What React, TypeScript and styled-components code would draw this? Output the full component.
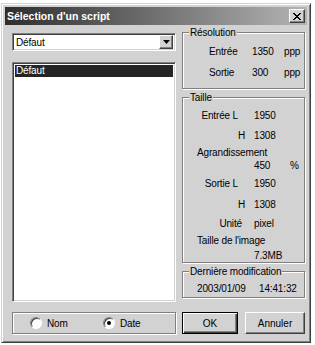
import React from 'react';
import styled, { createGlobalStyle, css } from 'styled-components';

const face = '#d2d2d2';

const Global = createGlobalStyle`
  html, body {
    margin: 0;
    padding: 0;
    background: #fff;
  }
  body {
    font-family: "Liberation Sans", Arial, sans-serif;
    font-size: 10px;
    letter-spacing: -0.15px;
    color: #000;
  }
`;

const raised = css`
  border: 1px solid;
  border-color: #fff #404040 #404040 #fff;
  box-shadow: inset -1px -1px #808080;
`;

const sunken = css`
  border: 1px solid;
  border-color: #808080 #fff #fff #808080;
  box-shadow: inset 1px 1px #404040, inset -1px -1px ${face};
`;

const Window = styled.div`
  margin: 3px 0 0 1px;
  width: 310px;
  height: 340px;
  box-sizing: border-box;
  background: ${face};
  border: 1px solid;
  border-color: ${face} #404040 #404040 ${face};
  box-shadow: inset 1px 1px #fff, inset -1px -1px #808080;
  padding: 3px;
  display: flex;
  flex-direction: column;
`;

const TitleBar = styled.div`
  height: 18px;
  flex: none;
  display: flex;
  align-items: center;
  justify-content: space-between;
  padding: 0 2px 0 2px;
  background: linear-gradient(to right, #2e2e2e, #b4b4b4);
`;

const Title = styled.span`
  color: #fff;
  font-weight: bold;
  font-size: 10.5px;
  letter-spacing: 0;
`;

const CloseButton = styled.button`
  ${raised};
  width: 16px;
  height: 14px;
  padding: 0;
  background: ${face};
  display: flex;
  align-items: center;
  justify-content: center;
`;

const Content = styled.div`
  display: grid;
  grid-template-columns: 164px 123px;
  grid-template-rows: 276px 22px;
  column-gap: 6px;
  row-gap: 10px;
  padding: 1px 2px 0 7px;
`;

const LeftCol = styled.div`
  display: flex;
  flex-direction: column;
`;

const Combo = styled.div`
  ${sunken};
  margin-top: 7px;
  height: 18px;
  box-sizing: border-box;
  background: #fff;
  display: flex;
  align-items: center;
  padding: 2px 2px 2px 3px;
`;

const ComboText = styled.span`
  flex: 1;
`;

const ComboButton = styled.div`
  ${raised};
  width: 14px;
  height: 14px;
  box-sizing: border-box;
  background: ${face};
  display: flex;
  align-items: center;
  justify-content: center;
`;

const List = styled.div`
  ${sunken};
  margin-top: 11px;
  flex: 1;
  background: #fff;
  padding: 2px;
`;

const ListItem = styled.div<{ $selected?: boolean }>`
  height: 12px;
  line-height: 12px;
  padding-left: 1px;
  background: ${(p) => (p.$selected ? '#242424' : 'transparent')};
  color: ${(p) => (p.$selected ? '#fff' : '#000')};
`;

const RightCol = styled.div`
  display: flex;
  flex-direction: column;
  gap: 2px;
`;

const Group = styled.fieldset<{ $h: number }>`
  margin: 0;
  padding: 0;
  min-width: 0;
  height: ${(p) => p.$h}px;
  box-sizing: border-box;
  border: 1px solid #808080;
  box-shadow: inset 1px 1px #fff, 1px 1px #fff;
`;

const Legend = styled.legend`
  margin-left: 6px;
  padding: 0 1px;
  line-height: 13px;
  background: ${face};
`;

const ResRow = styled.div<{ $h: number; $top?: number }>`
  display: grid;
  grid-template-columns: 43px 32px 1fr;
  height: ${(p) => p.$h}px;
  line-height: ${(p) => p.$h}px;
  margin-top: ${(p) => p.$top ?? 0}px;
  padding-left: 26px;
`;

const SizeRow = styled.div<{ $h: number; $top?: number }>`
  display: grid;
  grid-template-columns: 71px 36px 1fr;
  height: ${(p) => p.$h}px;
  line-height: ${(p) => p.$h}px;
  margin-top: ${(p) => p.$top ?? 0}px;
`;

const SizeLabel = styled.span<{ $pr: number }>`
  text-align: right;
  padding-right: ${(p) => p.$pr}px;
`;

const Caption = styled.div<{ $h: number }>`
  height: ${(p) => p.$h}px;
  line-height: ${(p) => p.$h}px;
  padding-left: 14px;
`;

const DateLine = styled.div`
  margin-top: 4px;
  line-height: 14px;
  padding-left: 14px;
  display: grid;
  grid-template-columns: 62px auto;
`;

const RadioBox = styled.div`
  height: 20px;
  border: 1px solid #808080;
  box-shadow: inset 1px 1px #fff, 1px 1px #fff;
  display: grid;
  grid-template-columns: 73px 73px;
  align-items: center;
  padding-left: 17px;
`;

const RadioLabel = styled.label`
  display: flex;
  align-items: center;
  gap: 5px;
`;

const RadioCircle = styled.span<{ $checked?: boolean }>`
  width: 12px;
  height: 12px;
  box-sizing: border-box;
  border-radius: 50%;
  border: 1px solid;
  border-color: #808080 #fff #fff #808080;
  box-shadow: inset 1px 1px #404040;
  background: #fff;
  display: flex;
  align-items: center;
  justify-content: center;
  &::after {
    content: '';
    width: 4px;
    height: 4px;
    border-radius: 50%;
    background: ${(p) => (p.$checked ? '#000' : 'transparent')};
  }
`;

const ButtonRow = styled.div`
  display: flex;
  gap: 7px;
`;

const Button = styled.button<{ $w: number; $default?: boolean }>`
  width: ${(p) => p.$w}px;
  height: 22px;
  padding: 0;
  font: inherit;
  color: #000;
  background: ${face};
  ${raised};
  ${(p) =>
    p.$default &&
    css`
      border: 1px solid #000;
      box-shadow: inset 1px 1px #fff, inset -1px -1px #404040, inset -2px -2px #808080;
    `}
`;

export default function App() {
  return (
    <>
      <Global />
      <Window>
        <TitleBar>
          <Title>Sélection d'un script</Title>
          <CloseButton>
            <svg width="8" height="7" viewBox="0 0 8 7">
              <path d="M0 0h2v1h-2zM6 0h2v1h-2zM1 1h2v1h-2zM5 1h2v1h-2zM2 2h4v1h-4zM3 3h2v1h-2zM2 4h4v1h-4zM1 5h2v1h-2zM5 5h2v1h-2zM0 6h2v1h-2zM6 6h2v1h-2z" fill="#000" />
            </svg>
          </CloseButton>
        </TitleBar>
        <Content>
          <LeftCol>
            <Combo>
              <ComboText>Défaut</ComboText>
              <ComboButton>
                <svg width="7" height="4" viewBox="0 0 7 4">
                  <path d="M0 0h7L3.5 4z" fill="#000" />
                </svg>
              </ComboButton>
            </Combo>
            <List>
              <ListItem $selected>Défaut</ListItem>
            </List>
          </LeftCol>
          <RightCol>
            <Group $h={63}>
              <Legend>Résolution</Legend>
              <ResRow $h={20} $top={3}>
                <span>Entrée</span>
                <span>1350</span>
                <span>ppp</span>
              </ResRow>
              <ResRow $h={22}>
                <span>Sortie</span>
                <span>300</span>
                <span>ppp</span>
              </ResRow>
            </Group>
            <Group $h={172}>
              <Legend>Taille</Legend>
              <SizeRow $h={20} $top={2}>
                <SizeLabel $pr={16}>Entrée L</SizeLabel>
                <span>1950</span>
                <span />
              </SizeRow>
              <SizeRow $h={20}>
                <SizeLabel $pr={9}>H</SizeLabel>
                <span>1308</span>
                <span />
              </SizeRow>
              <Caption $h={14}>Agrandissement</Caption>
              <SizeRow $h={12}>
                <span />
                <span>450</span>
                <span>%</span>
              </SizeRow>
              <SizeRow $h={24}>
                <SizeLabel $pr={16}>Sortie L</SizeLabel>
                <span>1950</span>
                <span />
              </SizeRow>
              <SizeRow $h={18}>
                <SizeLabel $pr={9}>H</SizeLabel>
                <span>1308</span>
                <span />
              </SizeRow>
              <SizeRow $h={20}>
                <SizeLabel $pr={12}>Unité</SizeLabel>
                <span>pixel</span>
                <span />
              </SizeRow>
              <Caption $h={14}>Taille de l'image</Caption>
              <SizeRow $h={16}>
                <span />
                <span>7.3MB</span>
                <span />
              </SizeRow>
            </Group>
            <Group $h={33}>
              <Legend>Dernière modification</Legend>
              <DateLine>
                <span>2003/01/09</span>
                <span>14:41:32</span>
              </DateLine>
            </Group>
          </RightCol>
          <RadioBox>
            <RadioLabel>
              <RadioCircle />
              Nom
            </RadioLabel>
            <RadioLabel>
              <RadioCircle $checked />
              Date
            </RadioLabel>
          </RadioBox>
          <ButtonRow>
            <Button $w={56} $default>
              OK
            </Button>
            <Button $w={60}>Annuler</Button>
          </ButtonRow>
        </Content>
      </Window>
    </>
  );
}
